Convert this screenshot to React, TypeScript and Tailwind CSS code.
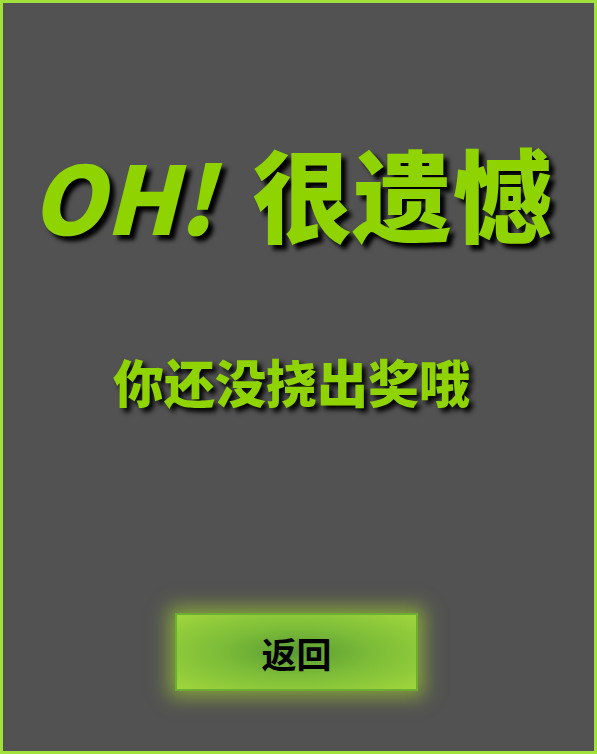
export default function App() {
  const cjk = "font-['Noto_Sans_CJK_SC',sans-serif]";

  return (
    <div className="flex h-[754px] w-[597px] flex-col items-center border-[3px] border-[#a2e03c] bg-[#525252]">
      <h1
        className={`mr-[14px] mt-[139px] flex items-baseline whitespace-nowrap text-[100px] font-black leading-none text-[#8fd400] [text-shadow:5px_5px_4px_#000] ${cjk}`}
      >
        <span className="text-[94px] italic">OH!</span>
        <span className="ml-[38px]">很遗憾</span>
      </h1>

      <p
        className={`mr-[14px] mt-[114px] text-[51px] font-black leading-none text-[#8fd400] [text-shadow:4px_4px_5px_#000] ${cjk}`}
      >
        你还没挠出奖哦
      </p>

      <button
        className={`mr-[4px] mt-[206px] flex h-[78px] w-[243px] items-center justify-center border-2 border-[#6cae32] bg-[radial-gradient(ellipse_at_center,#5a9c34_0%,#7cbc38_45%,#9fd63c_100%)] pt-[2px] text-[35px] font-bold text-black shadow-[0_0_18px_6px_rgba(176,230,40,0.55)] ${cjk}`}
      >
        返回
      </button>
    </div>
  );
}
